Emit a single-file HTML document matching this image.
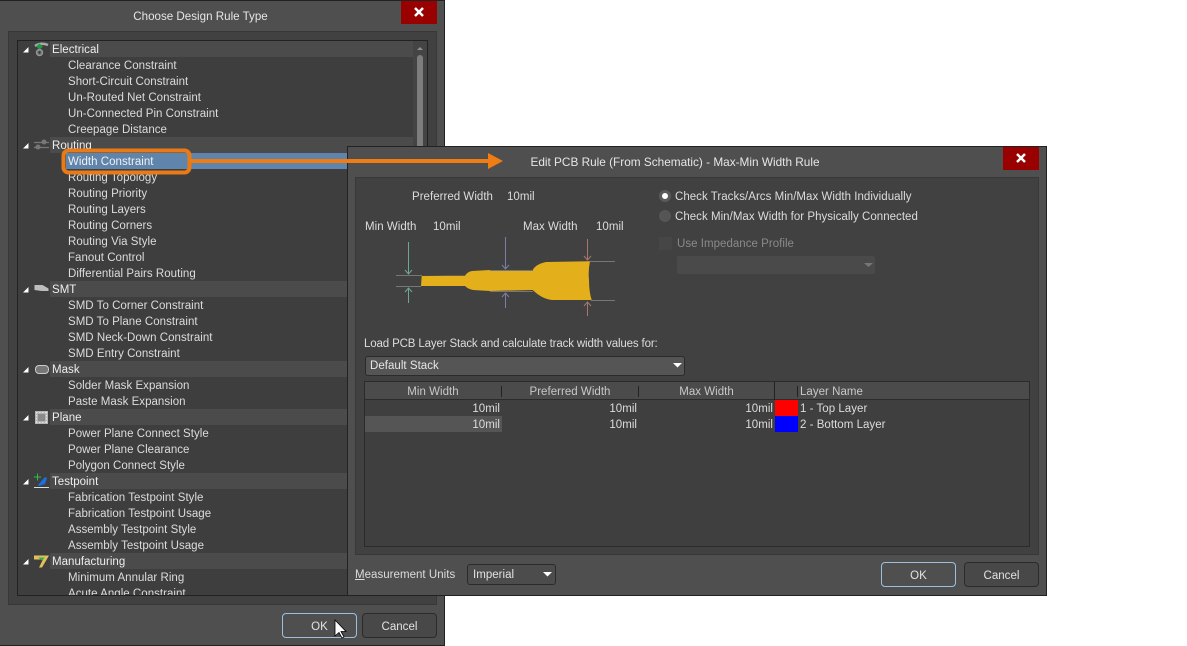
<!DOCTYPE html>
<html><head><meta charset="utf-8">
<style>
html,body{margin:0;padding:0;background:#fff;width:1187px;height:646px;overflow:hidden}
body{font-family:"Liberation Sans",sans-serif;font-size:11.5px;color:#e2e2e2;letter-spacing:.03px;position:relative}
div,span{position:absolute;box-sizing:border-box;white-space:nowrap}
svg{position:absolute;left:0;top:0}
.dlg{background:#4f4f4f;border:1px solid #222}
.panel{background:#414141;border:1px solid #383838}
.close{background:#990000;width:36px;height:23px}
.title{color:#e6e6e6;letter-spacing:0;text-align:center}
.t{line-height:18px;height:16px;color:#dcdcdc}
.cat{left:50px;width:363px;height:16px;background:#4b4b4b}
.btn{border:1px solid #2b2b2b;border-radius:4px;background:#484848;text-align:center;line-height:26px;height:25px;width:75px}
.btn.ok{border-color:#9cc0de;background:#4f4f4f}
.r{text-align:right;line-height:18px;height:16px;color:#dcdcdc}
.h{line-height:20px;height:18px;text-align:center;color:#c8c8c8}
.sep{width:1px;height:11px;top:386px;background:#222}
</style></head><body>

<div class="dlg" style="left:-1px;top:0;width:446px;height:646px"></div>
<div class="title" style="left:0;top:10px;width:401px;font-size:11.6px">Choose Design Rule Type</div>
<div class="close" style="left:401px;top:1px"></div>
<div class="panel" style="left:8px;top:31px;width:429px;height:574px"></div>
<div style="left:17px;top:40px;width:411px;height:556px;background:#3e3e3e;border:1px solid #222;overflow:hidden" id="tree">
<div class="cat" style="left:32px;top:0"></div>
<div class="cat" style="left:32px;top:96px"></div>
<div class="cat" style="left:32px;top:240px"></div>
<div class="cat" style="left:32px;top:320px"></div>
<div class="cat" style="left:32px;top:368px"></div>
<div class="cat" style="left:32px;top:432px"></div>
<div class="cat" style="left:32px;top:512px"></div>
<div style="left:48px;top:112px;width:362px;height:16px;background:#6085ac"></div>
<div style="left:395px;top:0;width:14px;height:554px;background:#444"></div>
<div style="left:399px;top:14px;width:6px;height:540px;background:#7d7d7d;border-radius:3px"></div>
<div class="t" style="left:34px;top:0;color:#eee">Electrical</div>
<div class="t" style="left:50px;top:16px">Clearance Constraint</div>
<div class="t" style="left:50px;top:32px">Short-Circuit Constraint</div>
<div class="t" style="left:50px;top:48px">Un-Routed Net Constraint</div>
<div class="t" style="left:50px;top:64px">Un-Connected Pin Constraint</div>
<div class="t" style="left:50px;top:80px">Creepage Distance</div>
<div class="t" style="left:34px;top:96px;color:#eee">Routing</div>
<div class="t" style="left:50px;top:112px;color:#f0f0f0">Width Constraint</div>
<div class="t" style="left:50px;top:128px">Routing Topology</div>
<div class="t" style="left:50px;top:144px">Routing Priority</div>
<div class="t" style="left:50px;top:160px">Routing Layers</div>
<div class="t" style="left:50px;top:176px">Routing Corners</div>
<div class="t" style="left:50px;top:192px">Routing Via Style</div>
<div class="t" style="left:50px;top:208px">Fanout Control</div>
<div class="t" style="left:50px;top:224px">Differential Pairs Routing</div>
<div class="t" style="left:34px;top:240px;color:#eee">SMT</div>
<div class="t" style="left:50px;top:256px">SMD To Corner Constraint</div>
<div class="t" style="left:50px;top:272px">SMD To Plane Constraint</div>
<div class="t" style="left:50px;top:288px">SMD Neck-Down Constraint</div>
<div class="t" style="left:50px;top:304px">SMD Entry Constraint</div>
<div class="t" style="left:34px;top:320px;color:#eee">Mask</div>
<div class="t" style="left:50px;top:336px">Solder Mask Expansion</div>
<div class="t" style="left:50px;top:352px">Paste Mask Expansion</div>
<div class="t" style="left:34px;top:368px;color:#eee">Plane</div>
<div class="t" style="left:50px;top:384px">Power Plane Connect Style</div>
<div class="t" style="left:50px;top:400px">Power Plane Clearance</div>
<div class="t" style="left:50px;top:416px">Polygon Connect Style</div>
<div class="t" style="left:34px;top:432px;color:#eee">Testpoint</div>
<div class="t" style="left:50px;top:448px">Fabrication Testpoint Style</div>
<div class="t" style="left:50px;top:464px">Fabrication Testpoint Usage</div>
<div class="t" style="left:50px;top:480px">Assembly Testpoint Style</div>
<div class="t" style="left:50px;top:496px">Assembly Testpoint Usage</div>
<div class="t" style="left:34px;top:512px;color:#eee">Manufacturing</div>
<div class="t" style="left:50px;top:528px">Minimum Annular Ring</div>
<div class="t" style="left:50px;top:544px">Acute Angle Constraint</div>
</div>
<div class="btn ok" style="left:282px;top:613px">OK</div>
<div class="btn" style="left:362px;top:613px">Cancel</div>

<!-- icons left -->
<svg width="445" height="646" style="z-index:1">
<path d="M415 8l8 8m0-8l-8 8" stroke="#fff" stroke-width="2.500" fill="none"/>
<path d="M417 50h6l-3-3z" fill="#8f8f8f"/>
<g fill="#fff"><path d="M23 52.500h5.500v-5.500z"/><path d="M23 148.500h5.500v-5.500z"/><path d="M23 292.500h5.500v-5.500z"/><path d="M23 372.500h5.500v-5.500z"/><path d="M23 420.500h5.500v-5.500z"/><path d="M23 484.500h5.500v-5.500z"/><path d="M23 564.500h5.500v-5.500z"/></g>
<path d="M35 46q6-4 13-1" stroke="#aaa" stroke-width="2.500" fill="none"/>
<path d="M39.500 43.500l3.500 3-3.500 3-3.500-3z" fill="#1f9a45"/>
<circle cx="39.500" cy="52.500" r="3.200" fill="#7a7a7a" stroke="#999"/><circle cx="39.500" cy="52.500" r="1.200" fill="#333"/>
<path d="M34 142.500h15M34 147.500h15" stroke="#777" stroke-width="1.200"/><circle cx="38" cy="147" r="2.500" fill="#777"/><circle cx="44" cy="142" r="2.500" fill="#777"/>
<path d="M34.500 285h8l6 3.500v2.500h-7l-7-1z" fill="#bdbdbd"/>
<rect x="35.500" y="365.500" width="13" height="8" rx="3.500" fill="#777" stroke="#ccc"/>
<rect x="35" y="411" width="13" height="13" fill="#b5b5b5"/><rect x="38" y="414" width="7" height="7" fill="#8a8a8a"/><path d="M36 412.500h11M36 422.500h11M36.500 412v11M46.500 412v11" stroke="#e2e2e2" stroke-dasharray="1.500 1.500"/>
<path d="M34 487.500h15" stroke="#ddd"/><path d="M38 485l7-8 2 1-2 6-6 2z" fill="#1b6fe0"/><path d="M34 477h7M37.500 473.500v7" stroke="#2cc04a"/>
<path d="M34 555.500h15l-7 12h-3l4-8h-9z" fill="#e3c05a"/><path d="M38 557.500h7l-3 3z" fill="#35b05a"/>
<path d="M335 620v16l4-3.500 3 5.500 2-1-3-5.500h5z" fill="#fff" stroke="#000" stroke-width=".8"/>
</svg>

<!-- right dialog -->
<div class="dlg" style="left:347px;top:146px;width:700px;height:450px;z-index:2"></div>
<div style="left:0;top:0;width:1187px;height:646px;z-index:3" id="r">
<div class="title" style="left:347px;top:155px;width:656px;font-size:11.8px">Edit PCB Rule (From Schematic) - Max-Min Width Rule</div>
<div class="close" style="left:1003px;top:147px"></div>
<div class="panel" style="left:355px;top:177px;width:684px;height:378px"></div>

<div class="t" style="left:412px;top:188px">Preferred Width</div><div class="t" style="left:507px;top:188px">10mil</div>
<div class="t" style="left:365px;top:218px">Min Width</div><div class="t" style="left:433px;top:218px">10mil</div>
<div class="t" style="left:523px;top:218px">Max Width</div><div class="t" style="left:596px;top:218px">10mil</div>

<div class="t" style="left:675px;top:188px">Check Tracks/Arcs Min/Max Width Individually</div>
<div class="t" style="left:675px;top:208px">Check Min/Max Width for Physically Connected</div>
<div class="t" style="left:677px;top:235px;color:#8a8a8a">Use Impedance Profile</div>
<div style="left:659px;top:237px;width:13px;height:13px;background:#464646"></div>
<div style="left:677px;top:256px;width:198px;height:18px;background:#4a4a4a;border-radius:2px"></div>

<div class="t" style="left:364px;top:335px;letter-spacing:-.14px">Load PCB Layer Stack and calculate track width values for:</div>
<div style="left:365px;top:356px;width:320px;height:20px;background:#555;border:1px solid #2b2b2b;border-radius:3px;line-height:19px;padding-left:4px;color:#e6e6e6">Default Stack</div>

<div style="left:364px;top:381px;width:666px;height:166px;background:#3f3f3f;border:1px solid #2b2b2b"></div>
<div style="left:365px;top:382px;width:664px;height:18px;background:#4b4b4b;border-bottom:1px solid #2b2b2b"></div>
<div class="h" style="left:365px;top:382px;width:136px">Min Width</div>
<div class="h" style="left:502px;top:382px;width:136px">Preferred Width</div>
<div class="h" style="left:639px;top:382px;width:135px">Max Width</div>
<div class="h" style="left:800px;top:382px">Layer Name</div>
<div class="sep" style="left:501px"></div><div class="sep" style="left:638px"></div><div class="sep" style="left:774px;top:382px;height:18px"></div><div class="sep" style="left:797px"></div>
<div style="left:365px;top:416px;width:137px;height:16px;background:#555"></div>
<div class="r" style="left:365px;top:400px;width:135px">10mil</div>
<div class="r" style="left:502px;top:400px;width:135px">10mil</div>
<div class="r" style="left:639px;top:400px;width:134px">10mil</div>
<div class="r" style="left:365px;top:416px;width:135px">10mil</div>
<div class="r" style="left:502px;top:416px;width:135px">10mil</div>
<div class="r" style="left:639px;top:416px;width:134px">10mil</div>
<div style="left:775px;top:400px;width:23px;height:16px;background:#f00"></div>
<div style="left:775px;top:416px;width:23px;height:16px;background:#00f"></div>
<div class="t" style="left:800px;top:400px">1 - Top Layer</div>
<div class="t" style="left:800px;top:416px">2 - Bottom Layer</div>

<div class="t" style="left:355px;top:566px"><u>M</u>easurement Units</div>
<div style="left:467px;top:564px;width:89px;height:21px;background:#4c4c4c;border:1px solid #2b2b2b;border-radius:3px;line-height:20px;padding-left:5px">Imperial</div>
<div class="btn ok" style="left:881px;top:562px">OK</div>
<div class="btn" style="left:964px;top:562px">Cancel</div>

<svg width="1187" height="646">
<path d="M1017 154l8 8m0-8l-8 8" stroke="#fff" stroke-width="2.500" fill="none"/>
<path d="M421.700 276L448 275.700H465Q467 272 472 271L490 270H532.700Q536 264 546 262L590 261.300Q588 271 589 280Q589 292 591.700 300L552 300Q542 299 532.700 290L490 291L473 290Q468 289 465 286H421Z" fill="#e3b01c"/>
<path d="M396 275.500h26M396 286.500h25M490 270.500h43M490 291.500h43M590 261.500h25M591 300.500h24" stroke="#777" fill="none"/>
<path d="M408.500 242v32M405 270l3.500 4 3.500-4M408.500 303v-15M405 292l3.500-4 3.500 4" stroke="#6fa890" fill="none"/>
<path d="M505.500 237v32M502 265l3.500 4 3.500-4M505.500 308v-15M502 297l3.500-4 3.500 4" stroke="#7d7ea6" fill="none"/>
<path d="M587.500 239v21M584 256l3.500 4 3.500-4M587.500 316v-14M584 306l3.500-4 3.500 4" stroke="#a87670" fill="none"/>
<circle cx="665" cy="196" r="6" fill="#5a5a5a"/><circle cx="665" cy="196" r="3" fill="#fff"/>
<circle cx="665" cy="216" r="6" fill="#555"/>
<path d="M864 263h9l-4.500 4z" fill="#777"/>
<path d="M673 363h9l-4.500 4.500z" fill="#fff"/>
<path d="M543 572h9l-4.500 4.500z" fill="#fff"/>
</svg>
</div>

<!-- callout -->
<svg width="1187" height="646" style="z-index:4">
<rect x="63.500" y="150.500" width="126" height="22" rx="5" fill="none" stroke="#ea7a15" stroke-width="4"/>
<path d="M190 159h298v-6l15 8-15 8v-6h-298z" fill="#f07c14"/>
</svg>
</body></html>
